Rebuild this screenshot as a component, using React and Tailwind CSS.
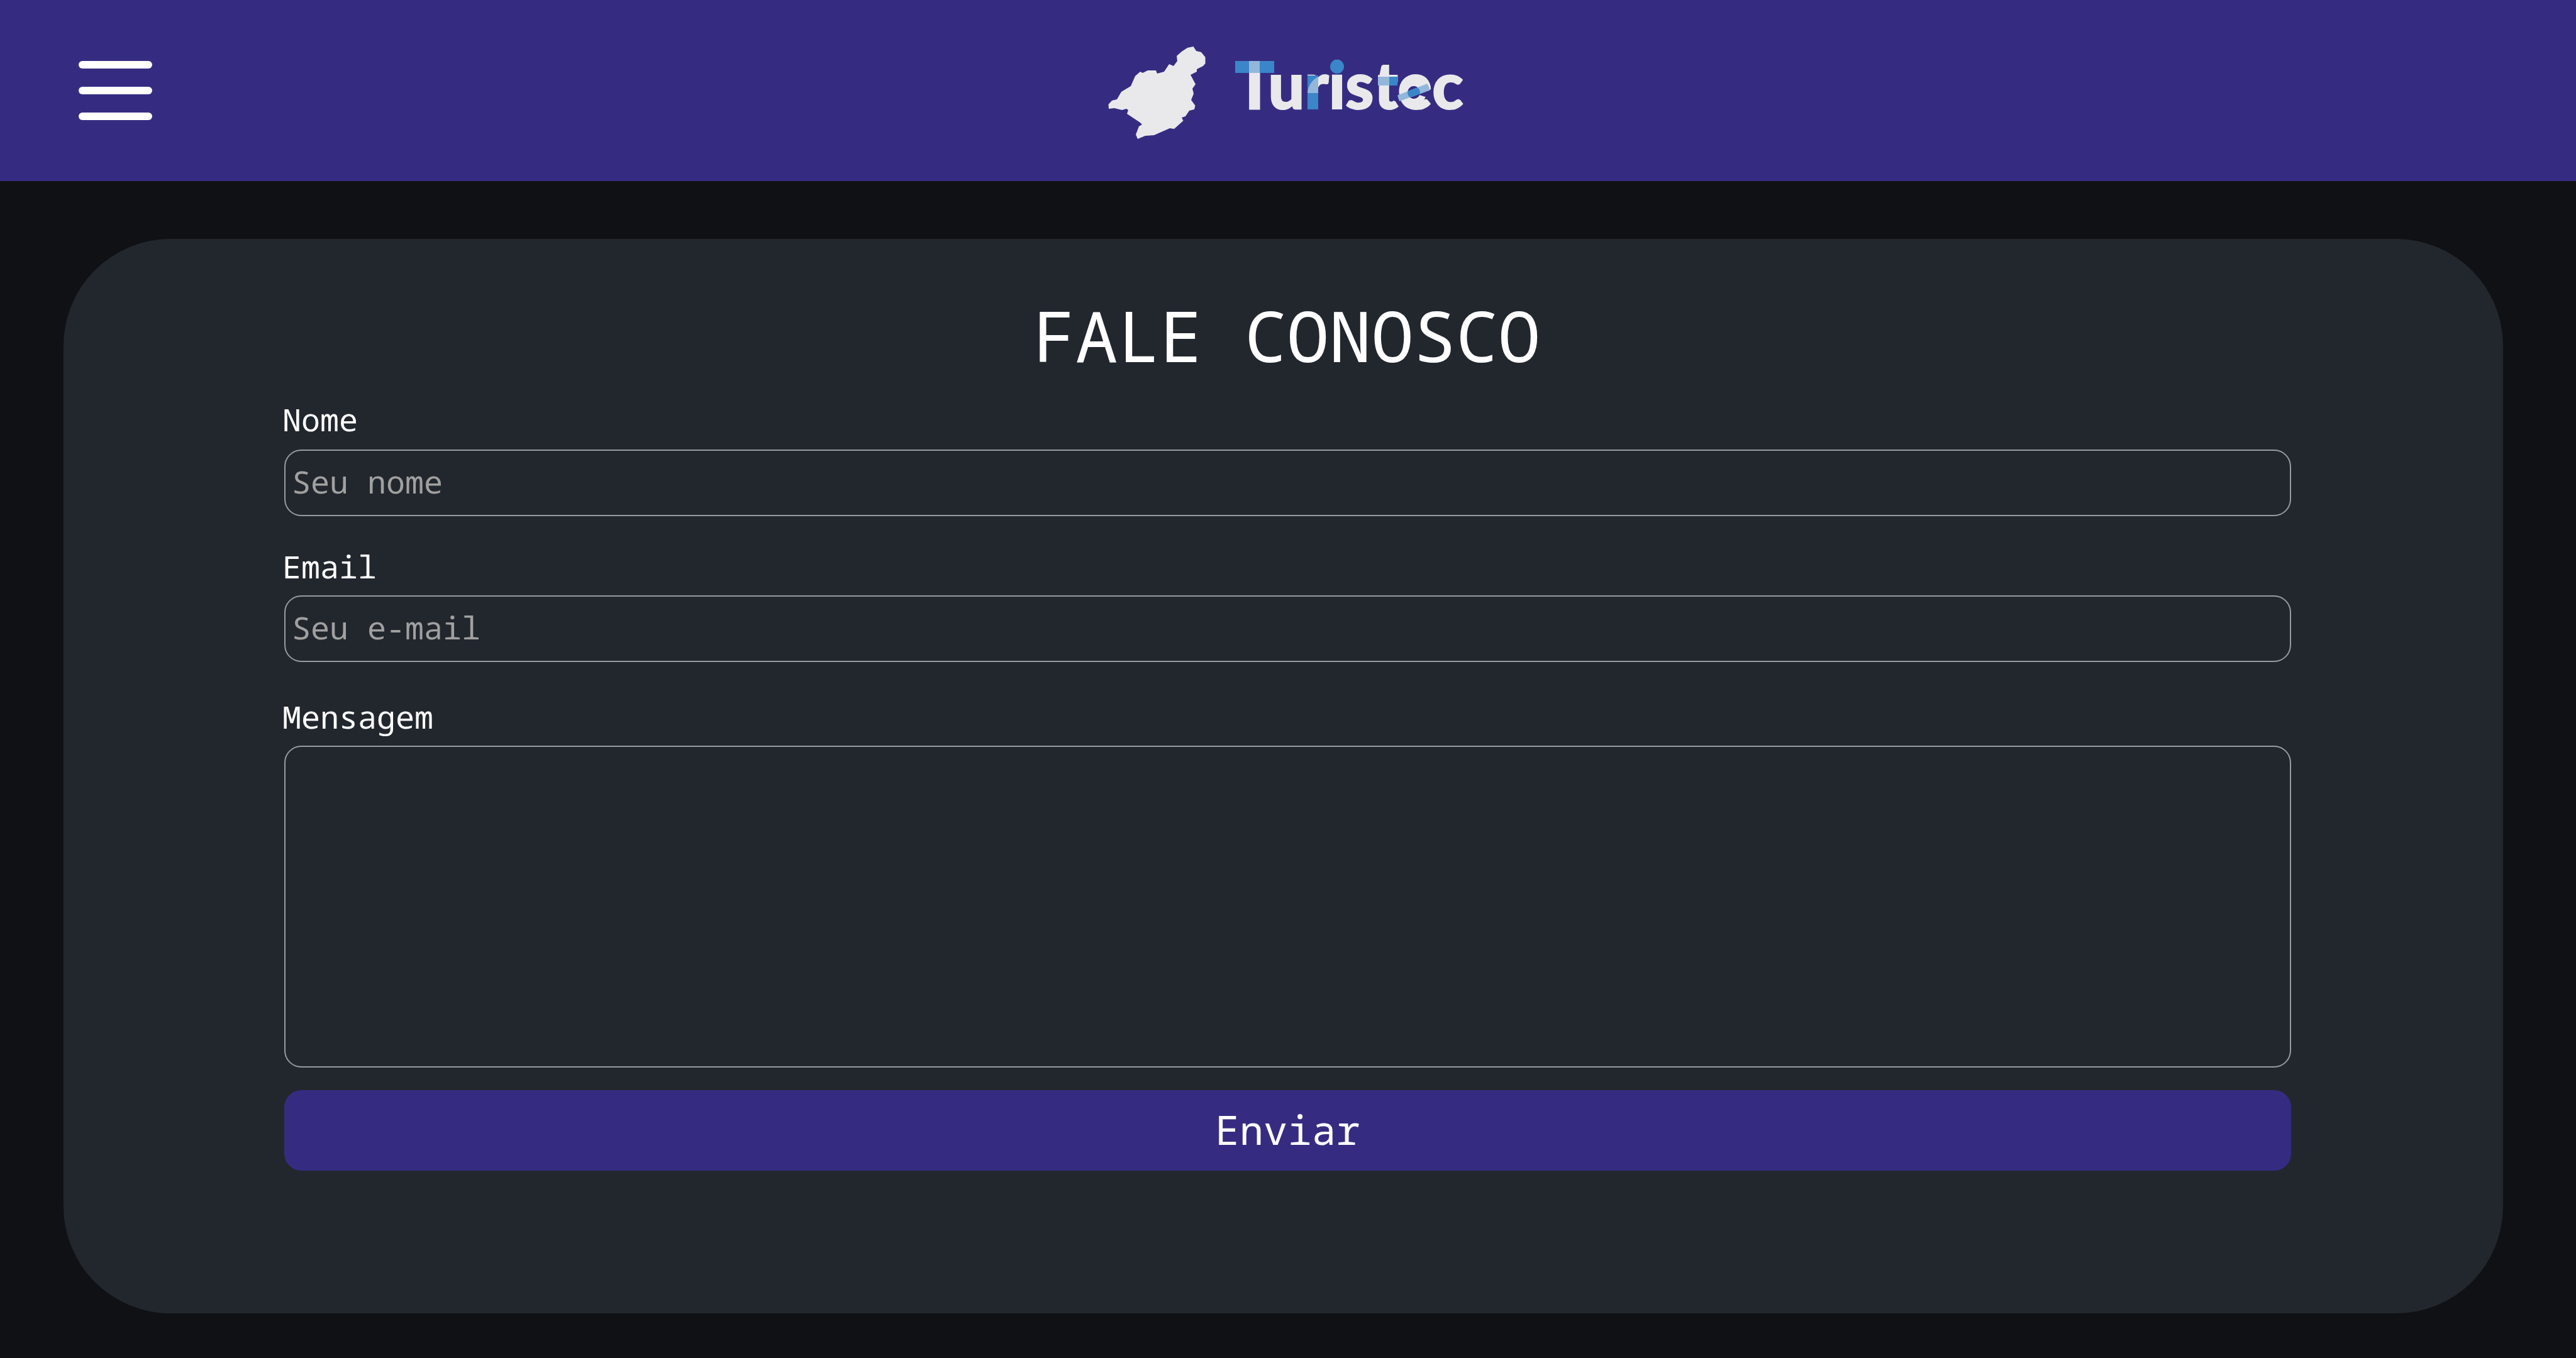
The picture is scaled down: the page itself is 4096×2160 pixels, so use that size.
const field =
  "block w-full rounded-[27px] border-2 border-[#989b9e] bg-transparent px-2.5 text-[50px] text-white outline-none placeholder:text-[#a0a0a0]";

const WHITE = "#e9e9ec";
const BLUE = "#3a86c8";
const LIGHT = "#93b7da";
const PURPLE = "#352c82";

function Logo() {
  return (
    <svg viewBox="0 0 616 190" className="h-[190px] w-[616px]" role="img" aria-label="Turistec">
      <defs>
        <clipPath id="disc">
          <circle cx="508" cy="98" r="26" />
        </clipPath>
        <clipPath id="counter">
          <circle cx="508" cy="97" r="10" />
        </clipPath>
      </defs>
      <path
        fill={WHITE}
        d="M23 123 L22.500 116 L28 110 L36 108 L43 96 L58 87 L65 71 L73 64 L77 66 L85 62 L98 62 L100 67 L111 64 L119 52 L126 55 L132 47 L131 39 L139 32 L148 26 L157.500 24 L162 31 L170 33 L176.500 41 L176.500 51 L173 55 L163 60 L163 64 L153 69 L161 84 L156 91 L158 99 L154 109 L160.500 118 L159 124 L151 126 L145 135 L139 137 L141.500 142 L127 155 L120 154 L95 165 L81 166 L69 171 L66 164 L71 151 L76 148 L73 145 L52 131 L54 125 L51 123 L44 125 L32 122 Z"
      />
      <text x="224" y="123" fontFamily="Lato" fontWeight="900" fontSize="102" fill={WHITE} stroke={WHITE} strokeWidth="2">
        Turistec
      </text>
      <rect x="224" y="47" width="62" height="19" fill={BLUE} />
      <rect x="246" y="47" width="17" height="19" fill={LIGHT} />
      <rect x="339" y="70" width="17" height="54" fill={BLUE} />
      <path d="M339 98 Q341 80 356 72 V98 Z" fill={LIGHT} />
      <circle cx="386" cy="56" r="11" fill={BLUE} />
      <rect x="443" y="60" width="8" height="28" fill={PURPLE} />
      <rect x="451" y="72" width="18" height="14" fill={LIGHT} />
      <rect x="469" y="72" width="13" height="14" fill={BLUE} />
      <circle cx="508" cy="97" r="15" fill="none" stroke={WHITE} strokeWidth="10" />
      <circle cx="508" cy="97" r="10" fill={PURPLE} />
      <path d="M514 100 L538 91 V108 L517 101 Z" fill={PURPLE} />
      <path d="M478 103 L532 82 L538 92 L480 113 Z" fill={LIGHT} clipPath="url(#disc)" />
      <path d="M478 103 L532 82 L538 92 L480 113 Z" fill={BLUE} clipPath="url(#counter)" />
    </svg>
  );
}

export default function App() {
  return (
    <div className="min-h-screen bg-[#101114] font-['Noto_Sans_Mono','DejaVu_Sans_Mono',monospace] text-white">
      <header className="grid h-72 grid-cols-[1fr_auto_1fr] items-start bg-[#352c82]">
        <button type="button" aria-label="Menu" className="mt-[97px] ml-[125px] flex w-[117px] flex-col gap-[29px]">
          <span className="h-3 w-full rounded-full bg-white" />
          <span className="h-3 w-full rounded-full bg-white" />
          <span className="h-3 w-full rounded-full bg-white" />
        </button>
        <a href="#inicio" className="mt-[50px] block">
          <Logo />
        </a>
      </header>
      <main className="pt-[92px] pr-[116px] pb-[71px] pl-[101px]">
        <section className="rounded-[170px] bg-[#22272e] pt-[85px] pr-[337px] pb-[227px] pl-[348px]">
          <h1 className="mb-9 text-center text-[112px] leading-[136px]">FALE CONOSCO</h1>
          <form onSubmit={(e) => e.preventDefault()}>
            <label htmlFor="nome" className="mb-[18px] block text-[50px] leading-[60px]">Nome</label>
            <div className="mb-[50px] pl-[3px]">
              <input id="nome" type="text" placeholder="Seu nome" className={`${field} h-[106px] pb-1`} />
            </div>
            <label htmlFor="email" className="mb-4 block text-[50px] leading-[60px]">Email</label>
            <div className="mb-[57px] pl-[3px]">
              <input id="email" type="email" placeholder="Seu e-mail" className={`${field} h-[106px] pb-1`} />
            </div>
            <label htmlFor="mensagem" className="mb-4 block text-[50px] leading-[60px]">Mensagem</label>
            <div className="pl-[3px]">
              <textarea id="mensagem" className={`${field} h-[512px] resize-none`} />
              <button type="submit" className="mt-9 block h-32 w-full rounded-[27px] bg-[#352c82] pb-0.5 text-[64px]">
                Enviar
              </button>
            </div>
          </form>
        </section>
      </main>
    </div>
  );
}
